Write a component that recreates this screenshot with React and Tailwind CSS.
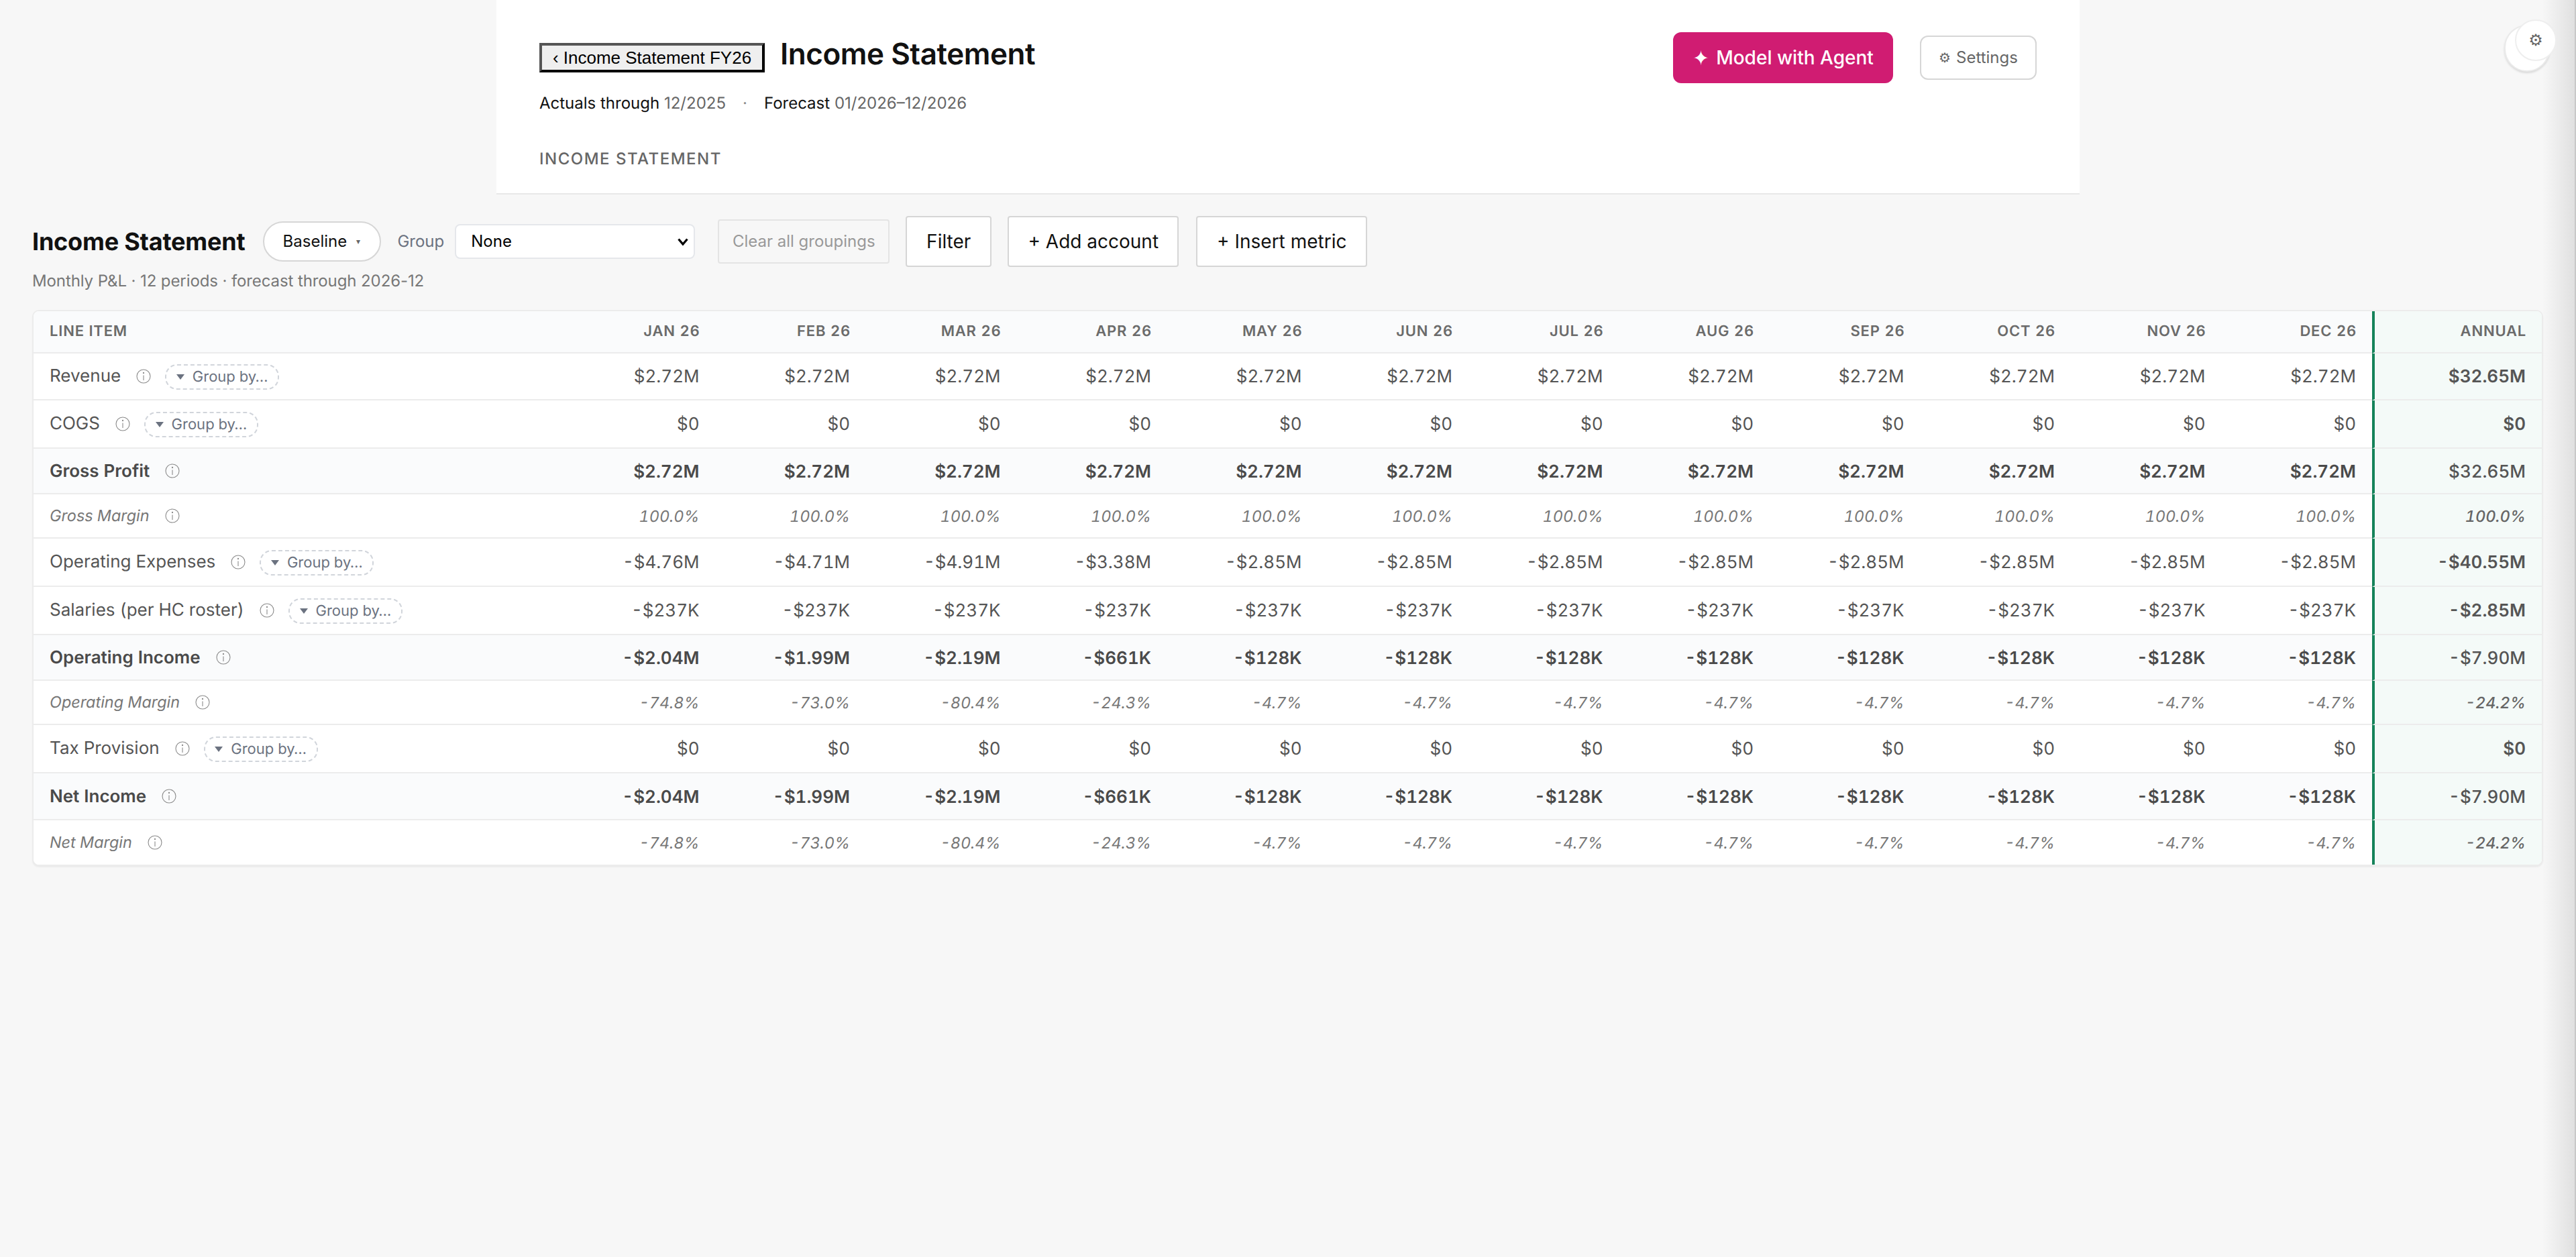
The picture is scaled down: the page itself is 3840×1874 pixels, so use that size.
const months = ['JAN 26','FEB 26','MAR 26','APR 26','MAY 26','JUN 26','JUL 26','AUG 26','SEP 26','OCT 26','NOV 26','DEC 26'];
const fill = (head, v, n = 12) => [...head, ...Array(n - head.length).fill(v)];
const opInc = fill(['-$2.04M','-$1.99M','-$2.19M','-$661K'], '-$128K');
const opMar = fill(['-74.8%','-73.0%','-80.4%','-24.3%'], '-4.7%');
const rows = [
  { label: 'Revenue', kind: 'line', h: 'h-[70px]', group: true, vals: fill([], '$2.72M'), annual: '$32.65M' },
  { label: 'COGS', kind: 'line', h: 'h-[72px]', group: true, vals: fill([], '$0'), annual: '$0' },
  { label: 'Gross Profit', kind: 'total', h: 'h-[68px]', vals: fill([], '$2.72M'), annual: '$32.65M' },
  { label: 'Gross Margin', kind: 'pct', h: 'h-[66px]', vals: fill([], '100.0%'), annual: '100.0%' },
  { label: 'Operating Expenses', kind: 'line', h: 'h-[72px]', group: true, vals: fill(['-$4.76M','-$4.71M','-$4.91M','-$3.38M'], '-$2.85M'), annual: '-$40.55M' },
  { label: 'Salaries (per HC roster)', kind: 'line', h: 'h-[72px]', group: true, vals: fill([], '-$237K'), annual: '-$2.85M' },
  { label: 'Operating Income', kind: 'total', h: 'h-[68px]', vals: opInc, annual: '-$7.90M' },
  { label: 'Operating Margin', kind: 'pct', h: 'h-[66px]', vals: opMar, annual: '-24.2%' },
  { label: 'Tax Provision', kind: 'line', h: 'h-[72px]', group: true, vals: fill([], '$0'), annual: '$0' },
  { label: 'Net Income', kind: 'total', h: 'h-[70px]', vals: opInc, annual: '-$7.90M' },
  { label: 'Net Margin', kind: 'pct', h: 'h-[66px]', last: true, vals: opMar, annual: '-24.2%' },
];
const labelCls = {
  line: 'text-[26px] text-[#555555] -translate-y-[1px]',
  total: 'text-[26px] font-semibold text-[#4a4a4a]',
  pct: 'text-[23.4px] italic text-[#777777]',
};
const valCls = {
  line: 'text-[26px] text-[#555555]',
  total: 'text-[26px] font-semibold text-[#4a4a4a] pt-[2px]',
  pct: 'text-[23.4px] italic text-[#777777] pt-[2px]',
};
const annualCls = {
  line: 'text-[26px] font-semibold text-[#555555]',
  total: 'text-[26px] font-medium text-[#555555] pt-[2px]',
  pct: 'text-[23.4px] italic font-medium text-[#666666] pt-[2px]',
};
function InfoIcon() {
  return (
    <svg width="22" height="22" viewBox="0 0 22 22" fill="none" stroke="#8a8a8a" strokeWidth="1.1" className="shrink-0">
      <circle cx="11" cy="11" r="10" />
      <path d="M11 9.5V17" />
      <circle cx="11" cy="6" r="0.6" fill="#8a8a8a" />
    </svg>
  );
}
function GroupChip() {
  return (
    <span className="inline-flex h-[38px] w-[170px] items-center justify-center gap-[12px] rounded-[18px] border-2 border-dashed border-[#d1d5db] text-[22px] text-[#6b7280] translate-y-[1px]">
      <svg width="12" height="8" viewBox="0 0 12 8" className="shrink-0"><path d="M0 0h12L6 8z" fill="#6b7280" /></svg>
      Group by…
    </span>
  );
}
const Btn = ({ children, w }) => (
  <button className={`h-[76px] ${w} rounded-[4px] border-2 border-[#d6d6d6] bg-white text-[28px] text-[#111111]`}>{children}</button>
);
export default function App() {
  return (
    <div className="relative h-[1874px] overflow-hidden bg-[#f7f7f7] font-['Inter',sans-serif] [text-rendering:geometricPrecision]">
      <header className="mx-auto flex h-[290px] w-[2360px] items-start justify-between border-b-2 border-[#e8e8e8] bg-white pl-[64px] pr-[64px]">
        <div>
          <div className="flex items-center gap-[23px] pt-[64px]">
            <button className="h-[44px] w-[336px] border-[4px] border-t-[#555555] border-l-[#555555] border-r-black border-b-black bg-[#efefef] font-['Liberation_Sans',sans-serif] text-[26px] leading-none text-black">‹ Income Statement FY26</button>
            <h1 className="text-[44px] font-semibold leading-[40px] tracking-[-0.44px] -translate-y-[6px] text-[#111111]">Income Statement</h1>
          </div>
          <p className="mt-[30px] text-[24px] leading-[32px] text-[#111111]">
            Actuals through <span className="text-[#666666]">12/2025</span>
            <span className="mx-[25px] text-[#888888]">·</span>
            Forecast <span className="text-[#666666]">01/2026–12/2026</span>
          </p>
          <p className="mt-[52px] text-[24px] font-medium uppercase leading-[30px] tracking-[1.5px] text-[#666666]">Income Statement</p>
        </div>
        <div className="flex items-center gap-[40px] pt-[48px] pr-[0px]">
          <button className="flex h-[76px] w-[328px] items-center justify-center gap-[10px] rounded-[12px] bg-[#d01c72] text-[28px] font-medium text-white"><span className="text-[30px] leading-none">✦</span>Model with Agent</button>
          <button className="flex h-[66px] w-[174px] items-center justify-center gap-[8px] rounded-[12px] border-2 border-[#d6d6d6] bg-white text-[24px] text-[#666666]"><span className="text-[20px]">⚙</span>Settings</button>
        </div>
      </header>

      <section className="px-[48px] pt-[32px]">
        <div className="flex items-center gap-[24px]">
          <h2 className="text-[36px] font-bold leading-[44px] tracking-[-0.2px] text-[#111111]">Income Statement</h2>
          <button className="ml-[3px] flex h-[60px] w-[176px] items-center justify-center gap-[14px] rounded-full border-2 border-[#d6d6d6] bg-white pr-[2px] text-[24px] text-[#111111]">Baseline <span className="text-[12px] text-[#666666]">▾</span></button>
          <span className="text-[24px] text-[#6b7280]">Group</span>
          <div className="relative -ml-[8px] h-[52px] w-[358px]">
            <select className="h-full w-full appearance-none rounded-[8px] border-2 border-[#e5e7eb] bg-white pl-[22px] text-[24px] text-black"><option>None</option></select>
            <svg width="16" height="12" viewBox="0 0 16 12" className="pointer-events-none absolute right-[10px] top-[21px]" fill="none" stroke="#000" strokeWidth="3.2"><path d="M1.5 1.5L8 9l6.5-7.5" /></svg>
          </div>
          <button className="ml-[10px] h-[66px] w-[256px] rounded-[4px] border-2 border-[#e4e4e4] text-[24px] text-[#999999]">Clear all groupings</button>
          <Btn w="w-[128px]">Filter</Btn>
          <Btn w="w-[255px]">+ Add account</Btn>
          <span className="ml-[2px]"><Btn w="w-[255px]">+ Insert metric</Btn></span>
        </div>
        <p className="mt-[5px] text-[24px] leading-[32px] tracking-[-0.1px] text-[#777777]">Monthly P&amp;L · 12 periods · forecast through 2026-12</p>

        <div className="mt-[27px] w-[3743px] overflow-hidden rounded-[10px] border-2 border-[#ececec] bg-white shadow-[0_2px_2px_rgba(0,0,0,0.05)]">
          <table className="w-[3739px] table-fixed border-separate border-spacing-0 tabular-nums">
            <colgroup>
              <col className="w-[792px]" />
              {months.map((m) => <col key={m} className="w-[224.5px]" />)}
              <col className="w-[253px]" />
            </colgroup>
            <thead>
              <tr className="text-[22px] font-semibold uppercase tracking-[0.8px] text-[#6b6b6b]">
                <th className="h-[63px] border-b-2 border-[#ececec] bg-[#fafbfc] pl-[24px] text-left font-semibold">Line Item</th>
                {months.map((m) => <th key={m} className="border-b-2 border-[#ececec] bg-[#fafbfc] pr-[23px] text-right font-semibold">{m}</th>)}
                <th className="border-b-2 border-l-4 border-b-[#ececec] border-l-[#15835a] bg-[#f4faf8] pr-[23px] text-right font-semibold">Annual</th>
              </tr>
            </thead>
            <tbody>
              {rows.map((r) => {
                const bg = r.kind === 'total' ? 'bg-[#fafbfc]' : 'bg-white';
                const line = r.last ? '' : 'border-b-2 border-[#ececec]';
                return (
                  <tr key={r.label}>
                    <td className={`${r.h} ${line} ${bg} pl-[24px]`}>
                      <div className="flex items-center">
                        <span className={`${labelCls[r.kind]} mr-[23px]`}>{r.label}</span>
                        <InfoIcon />
                        {r.group && <span className="ml-[21px]"><GroupChip /></span>}
                      </div>
                    </td>
                    {r.vals.map((v, i) => <td key={i} className={`${line} ${bg} pr-[24px] text-right ${valCls[r.kind]}`}>{v}</td>)}
                    <td className={`border-l-4 border-l-[#15835a] ${r.last ? '' : 'border-b-2 border-b-[#ececec]'} bg-[#f4faf8] pr-[24px] text-right ${annualCls[r.kind]}`}>{r.annual}</td>
                  </tr>
                );
              })}
            </tbody>
          </table>
        </div>
      </section>

      <div className="pointer-events-none absolute right-0 top-0 h-full w-[50px] border-r-2 border-[#c8c8c8] bg-gradient-to-r from-transparent to-[#e0e0e0]" />
      <div className="absolute left-[3733px] top-[37px] h-[70px] w-[68px] rounded-full border-2 border-[#eaeaea] bg-white shadow-[0_2px_3px_rgba(0,0,0,0.12)]" />
      <div className="absolute left-[3749px] top-[29px] flex h-[62px] w-[62px] items-center justify-center rounded-full border-2 border-[#eeeeee] bg-white text-[24px] text-[#666666]">⚙</div>
    </div>
  );
}
